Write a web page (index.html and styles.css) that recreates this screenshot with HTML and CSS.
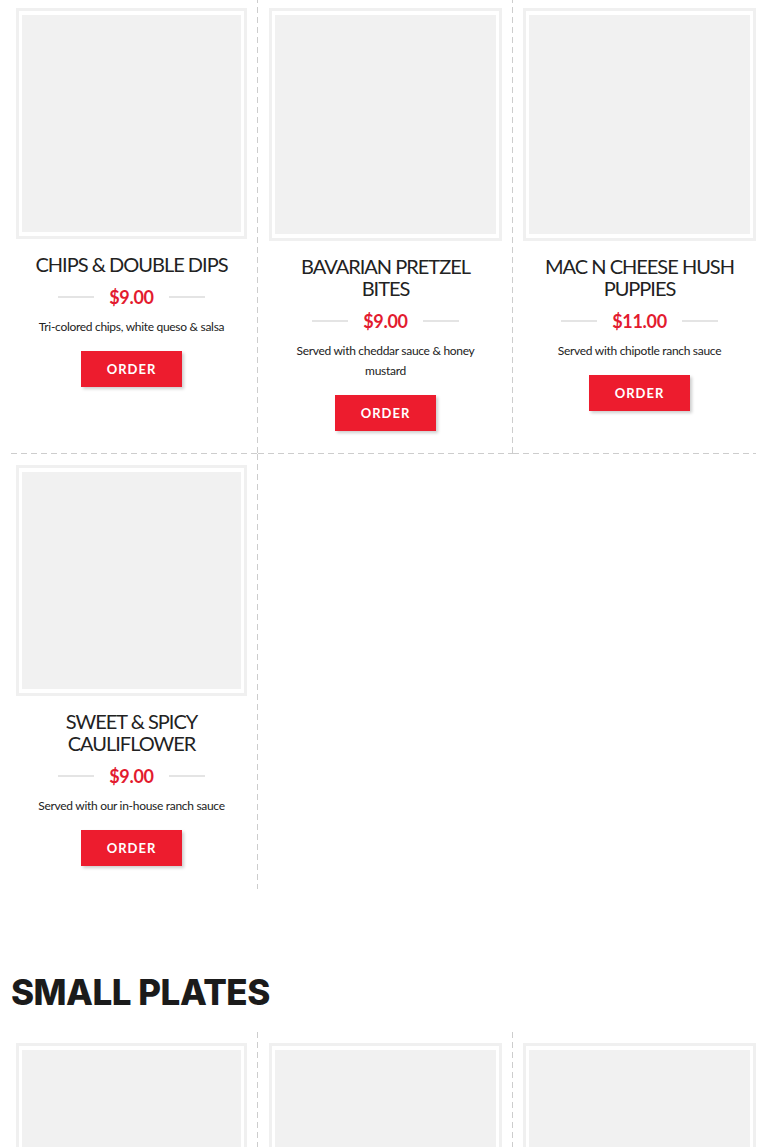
FILE: index.html
```html
<!DOCTYPE html>
<html lang="en">
<head>
    <meta charset="UTF-8">
    <meta name="viewport" content="width=device-width, initial-scale=1.0">
    <title>Menu - Appetizers &amp; Small Plates</title>
    <link rel="stylesheet" href="styles.css">
</head>
<body>
    <div class="page">
        <!-- Appetizers (continued) -->
        <section class="menu-section first">
            <div class="menu-grid">
                <div class="menu-item">
                    <div class="item-photo"><div class="photo-fill"></div></div>
                    <h3 class="item-name">CHIPS &amp; DOUBLE DIPS</h3>
                    <div class="item-price"><span>$9.00</span></div>
                    <p class="item-desc">Tri-colored chips, white queso &amp; salsa</p>
                    <a href="#" class="order-btn">ORDER</a>
                </div>
                <div class="menu-item">
                    <div class="item-photo"><div class="photo-fill"></div></div>
                    <h3 class="item-name">BAVARIAN PRETZEL BITES</h3>
                    <div class="item-price"><span>$9.00</span></div>
                    <p class="item-desc">Served with cheddar sauce &amp; honey mustard</p>
                    <a href="#" class="order-btn">ORDER</a>
                </div>
                <div class="menu-item">
                    <div class="item-photo"><div class="photo-fill"></div></div>
                    <h3 class="item-name">MAC N CHEESE HUSH PUPPIES</h3>
                    <div class="item-price"><span>$11.00</span></div>
                    <p class="item-desc">Served with chipotle ranch sauce</p>
                    <a href="#" class="order-btn">ORDER</a>
                </div>
                <div class="menu-item last-row">
                    <div class="item-photo"><div class="photo-fill"></div></div>
                    <h3 class="item-name">SWEET &amp; SPICY CAULIFLOWER</h3>
                    <div class="item-price"><span>$9.00</span></div>
                    <p class="item-desc">Served with our in-house ranch sauce</p>
                    <a href="#" class="order-btn">ORDER</a>
                </div>
            </div>
        </section>

        <!-- Small plates -->
        <section class="menu-section">
            <h2 class="section-title">SMALL PLATES</h2>
            <div class="menu-grid">
                <div class="menu-item">
                    <div class="item-photo"><div class="photo-fill"></div></div>
                </div>
                <div class="menu-item">
                    <div class="item-photo"><div class="photo-fill"></div></div>
                </div>
                <div class="menu-item">
                    <div class="item-photo"><div class="photo-fill"></div></div>
                </div>
            </div>
        </section>
    </div>
</body>
</html>
```

FILE: styles.css
```css
* {
    margin: 0;
    padding: 0;
    box-sizing: border-box;
}

body {
    font-family: Lato, 'Open Sans', sans-serif;
    background: white;
    color: #222;
    overflow: hidden;
}

.page {
    padding-left: 11px;
}

.menu-section.first {
    margin-top: -3px;
}

.section-title {
    font-family: Inter, 'Liberation Sans', sans-serif;
    font-weight: 800;
    font-size: 35px;
    line-height: 42px;
    color: #1b1b1b;
    letter-spacing: -0.5px;
    margin-top: 82px;
    margin-bottom: 19px;
}

.menu-grid {
    display: grid;
    grid-template-columns: 247px 255px 243px;
}

/* dashed separators: right edge + bottom edge */
.menu-item {
    --dash-right: repeating-linear-gradient(to bottom, #cdcdcd 0 6px, transparent 6px 10px);
    --dash-bottom: repeating-linear-gradient(to right, #cdcdcd 0 6px, transparent 6px 10px);
    padding: 11px 11px 23px;
    text-align: center;
    background-image: var(--dash-right), var(--dash-bottom);
    background-size: 1px 100%, 100% 1px;
    background-position: right top, left bottom;
    background-repeat: no-repeat;
}

.menu-item:nth-child(3n+1) {
    padding-left: 5px;
}

.menu-item:nth-child(3n) {
    padding-left: 10px;
    padding-right: 0;
    --dash-right: none;
}

.menu-item.last-row {
    --dash-bottom: none;
}

.item-photo {
    aspect-ratio: 1 / 1;
    border: 3px solid #f0f0f0;
    padding: 4px 3px;
    background: white;
}

.photo-fill {
    width: 100%;
    height: 100%;
    background: #f1f1f1;
}

.item-name {
    font-size: 20px;
    font-weight: 400;
    line-height: 22px;
    letter-spacing: -1px;
    color: #222;
    margin-top: 14px;
    padding: 0 8px;
}

.item-price {
    display: flex;
    align-items: center;
    justify-content: center;
    gap: 15px;
    margin-top: 10px;
    height: 24px;
}

.item-price::before,
.item-price::after {
    content: "";
    width: 36px;
    height: 2px;
    background: #e4e4e4;
}

.item-price span {
    font-size: 18px;
    font-weight: 700;
    color: #e31b2f;
    letter-spacing: -0.3px;
}

.item-desc {
    font-size: 12px;
    line-height: 20px;
    color: #222;
    margin-top: 8px;
    padding: 0 16px;
    letter-spacing: -0.3px;
}

.order-btn {
    display: inline-block;
    width: 101px;
    height: 36px;
    line-height: 36px;
    margin-top: 14px;
    background: #ed1c2e;
    color: white;
    font-size: 13px;
    font-weight: 700;
    letter-spacing: 1px;
    text-decoration: none;
    box-shadow: 2px 2px 3px rgba(0,0,0,0.2);
}
```
